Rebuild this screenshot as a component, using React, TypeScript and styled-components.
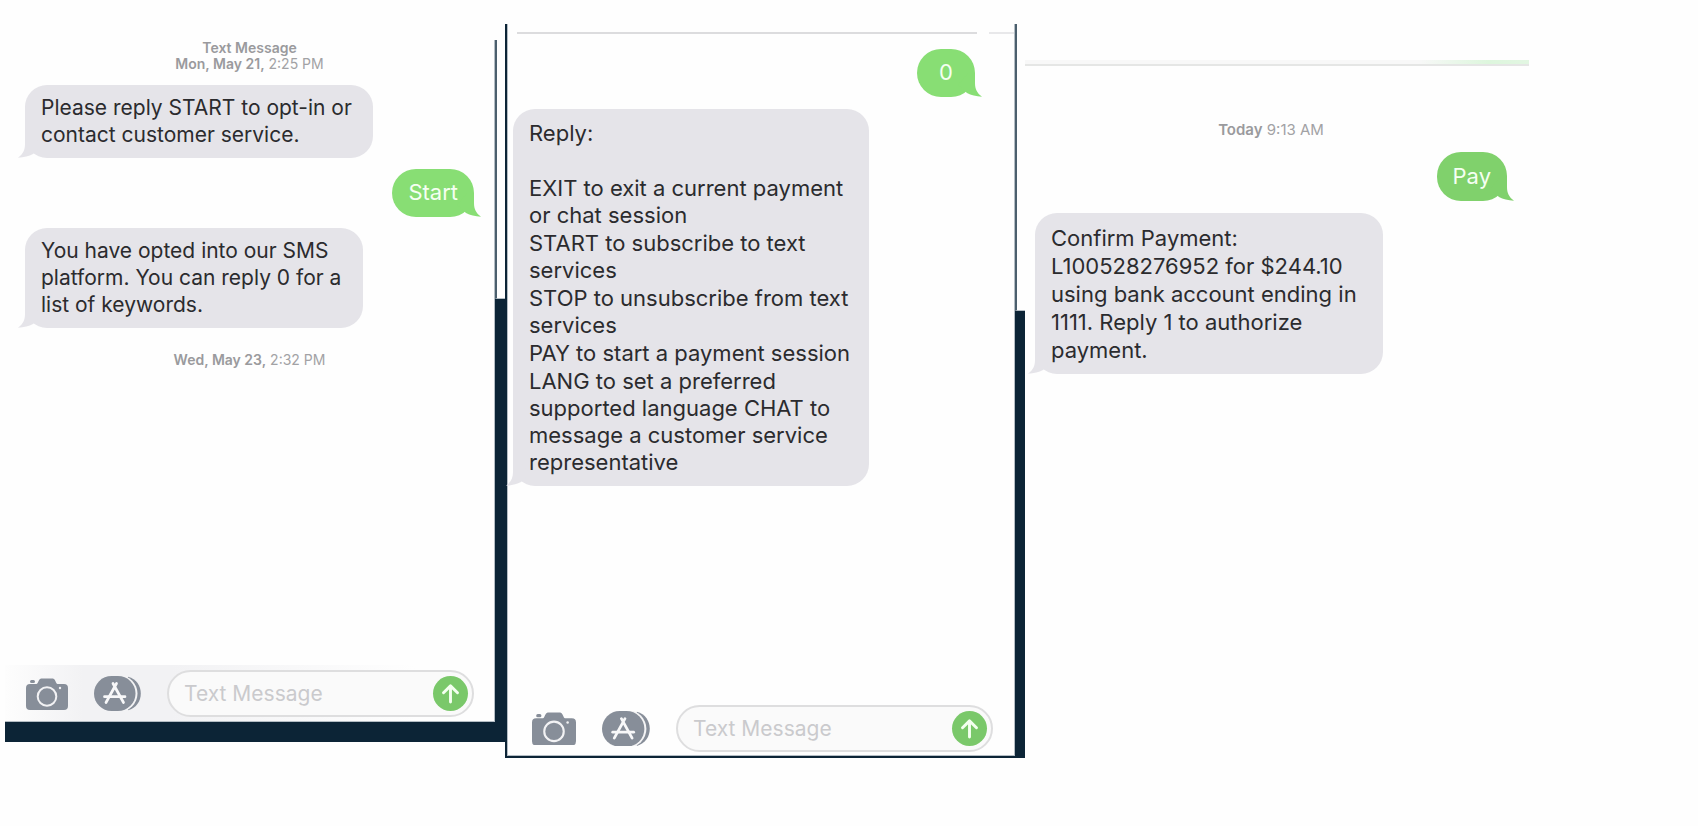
import React from "react";
import styled, { createGlobalStyle } from "styled-components";

const navy = "#0c2436";
const slate = "#4b5f6d";
const edge = "#b4bdc4";
const iconGray = "#878e99";

const GlobalStyle = createGlobalStyle`
  *, *::before, *::after { box-sizing: border-box; }
  body {
    margin: 0;
    background: #fefefe;
    font-family: Inter, "Liberation Sans", sans-serif;
    color: #2b2b2e;
  }
`;

const Page = styled.main`
  display: grid;
  grid-template-columns: 500fr 520fr 504fr 169fr;
  min-height: 100vh;
  padding-left: 5px;
`;

const Column = styled.section<{ $top: number; $bottom: number }>`
  display: flex;
  flex-direction: column;
  min-width: 0;
  margin: ${(p) => p.$top}px 0 ${(p) => p.$bottom}px;
`;

const Device = styled.div<{ $leftRule?: boolean }>`
  display: flex;
  flex: 1;
  border-left: ${(p) => (p.$leftRule ? `2px solid ${navy}` : "0")};
`;

const Screen = styled.div<{ $leftEdge?: boolean }>`
  display: flex;
  flex: 1;
  flex-direction: column;
  min-width: 0;
  border: 0 solid ${edge};
  border-width: 0 1px 1px ${(p) => (p.$leftEdge ? 1 : 0)}px;
`;

const Side = styled.div`
  display: flex;
  flex-direction: column;
  width: 10px;
  background: ${navy};
`;

const SideTop = styled.div<{ $height: number }>`
  height: ${(p) => p.$height}px;
  background: #fefefe;
  border-left: 2px solid ${slate};
  border-bottom: 1px solid ${edge};
`;

const Base = styled.div<{ $height: number }>`
  height: ${(p) => p.$height}px;
  background: ${navy};
`;

const Thread = styled.div<{ $pad: string }>`
  display: flex;
  flex: 1;
  flex-direction: column;
  align-items: flex-start;
  padding: ${(p) => p.$pad};
`;

const Stamp = styled.p<{ $gap: number; $size?: number }>`
  align-self: stretch;
  margin: 0 0 ${(p) => p.$gap}px;
  text-align: center;
  font-size: ${(p) => p.$size ?? 14}px;
  line-height: 16px;
  color: #a2a2a5;

  strong { font-weight: 600; color: #9a9a9d; }
`;

const Incoming = styled.div<{ $width: number; $size?: number; $line?: number; $gap?: number; $top?: number }>`
  position: relative;
  width: ${(p) => p.$width}px;
  max-width: 100%;
  margin-bottom: ${(p) => p.$gap ?? 0}px;
  padding: ${(p) => p.$top ?? 9}px 16px 10px;
  border-radius: 22px;
  background: #e5e4e9;
  font-size: ${(p) => p.$size ?? 21}px;
  line-height: ${(p) => p.$line ?? 27}px;

  p { margin: 0; }
  p + p { margin-top: 1px; }
  p:first-child:not(:last-child) { margin-bottom: 28px; }
`;

const Outgoing = styled.div<{ $gap: number; $color?: string; $line?: number }>`
  position: relative;
  align-self: flex-end;
  min-width: 58px;
  margin-bottom: ${(p) => p.$gap}px;
  padding: 10px 16px 11px;
  border-radius: 24px;
  background: ${(p) => p.$color ?? "#88de74"};
  color: #f5fff2;
  font-size: 22px;
  line-height: ${(p) => p.$line ?? 27}px;
  text-align: center;
`;

const TailShape = styled.svg<{ $side: "left" | "right" }>`
  position: absolute;
  bottom: 0;
  ${(p) => p.$side}: -7px;
  width: 26px;
  height: 24px;
  transform: ${(p) => (p.$side === "right" ? "scaleX(-1)" : "none")};
`;

const Tail = ({ side, color }: { side: "left" | "right"; color: string }) => (
  <TailShape $side={side} viewBox="0 0 26 24" aria-hidden="true">
    <path d="M7 0V10C7 16 5 20 0 23.800C6 23.500 11 22 15 20L24 12L14 0Z" fill={color} />
  </TailShape>
);

const TopRule = styled.div`
  display: flex;
  gap: 12px;
  padding: 8px 0 0 9px;

  &::before, &::after { content: ""; height: 2px; background: #dcdcde; }
  &::before { flex: 461; }
  &::after { flex: 25; background: #e8e8ea; }
`;

const HeaderRule = styled.div`
  height: 6px;
  margin-top: 60px;
  border-bottom: 2px solid #e5e6e5;
  background: linear-gradient(90deg, #f8f8f8 78%, #ddf6dd 92%, #e2f6e2);
`;

const ComposerBar = styled.form<{ $pad: string; $tinted?: boolean }>`
  display: flex;
  align-items: center;
  gap: 26px;
  padding: ${(p) => p.$pad};
  background: ${(p) =>
    p.$tinted
      ? "linear-gradient(90deg, #fdfdfd, #f2f2f4 16%, #f2f2f4 34%, #fefefe 84%)"
      : "transparent"};
`;

const IconButton = styled.button<{ $width: number }>`
  flex: none;
  width: ${(p) => p.$width}px;
  padding: 0;
  border: 0;
  background: none;
  color: ${iconGray};

  svg { display: block; width: 100%; height: auto; }
`;

const Field = styled.div`
  display: flex;
  flex: 1;
  align-items: center;
  min-width: 0;
  height: 47px;
  padding: 0 4px 0 15px;
  border: 2px solid #dededf;
  border-radius: 24px;
  background: #fafafa;
`;

const TextInput = styled.input`
  flex: 1;
  min-width: 0;
  padding: 0;
  border: 0;
  outline: 0;
  background: none;
  font: 21px/27px Inter, "Liberation Sans", sans-serif;
  color: #2b2b2e;

  &::placeholder { color: #cacacd; opacity: 1; }
`;

const SendButton = styled.button`
  flex: none;
  width: 35px;
  height: 35px;
  padding: 0;
  border: 0;
  border-radius: 50%;
  background: #7ac86a;

  svg { display: block; }
`;

const CameraIcon = () => (
  <svg viewBox="0 0 42 32" aria-hidden="true">
    <path
      d="M4 6H10.500C12 6 12.500 1 15 .5H27C29.500 1 30 6 31.500 6H38Q42 6 42 10V28Q42 32 38 32H4Q0 32 0 28V10Q0 6 4 6Z"
      fill="currentColor"
    />
    <rect x="4" y="2" width="5" height="3" rx="1.500" fill="currentColor" />
    <circle cx="21" cy="18.500" r="9.300" fill="none" stroke="#f2f2f4" strokeWidth="2" />
    <circle cx="34" cy="10" r="1.200" fill="#f2f2f4" />
  </svg>
);

const AppsIcon = () => (
  <svg viewBox="0 0 47 35" aria-hidden="true">
    <path d="M34 .8C42.500 3 46.800 10 46.800 17.500S42.500 32 34 34.200Z" fill="currentColor" />
    <rect x="0" y="-1" width="43.500" height="37" rx="18.500" fill="#f4f4f5" />
    <rect x="0" y="0" width="41.500" height="35" rx="17.500" fill="currentColor" />
    <g stroke="#f8f8f9" strokeWidth="2.700" strokeLinecap="round" fill="none">
      <path d="M19 7.500L29.500 26.500M22.500 7.500L12 26.500" />
      <path d="M10.500 20.700H31" />
    </g>
  </svg>
);

const Composer = ({ id, pad, tinted, icons }: {
  id: string;
  pad: string;
  tinted?: boolean;
  icons: [number, number];
}) => (
  <ComposerBar $pad={pad} $tinted={tinted} onSubmit={(e) => e.preventDefault()}>
    <IconButton type="button" aria-label="Camera" $width={icons[0]}><CameraIcon /></IconButton>
    <IconButton type="button" aria-label="Apps" $width={icons[1]}><AppsIcon /></IconButton>
    <Field>
      <TextInput id={id} type="text" placeholder="Text Message" aria-label="Text Message" />
      <SendButton type="submit" aria-label="Send">
        <svg viewBox="0 0 35 35" aria-hidden="true">
          <path
            d="M17.500 26V10.500M10.500 16.800L17.500 9.900L24.500 16.800"
            fill="none"
            stroke="#f4fff0"
            strokeWidth="2.900"
            strokeLinecap="round"
            strokeLinejoin="round"
          />
        </svg>
      </SendButton>
    </Field>
  </ComposerBar>
);

export default function App() {
  return (
    <>
      <GlobalStyle />
      <Page>
        <Column $top={40} $bottom={84}>
          <Device>
            <Screen>
              <Thread $pad="0 20px 0">
                <Stamp $gap={13}>
                  <strong>Text Message</strong>
                  <br />
                  <strong>Mon, May 21,</strong> 2:25 PM
                </Stamp>
                <Incoming $width={348} $gap={11}>
                  Please reply START to opt-in or contact customer service.
                  <Tail side="left" color="#e5e4e9" />
                </Incoming>
                <Outgoing $gap={11}>
                  Start
                  <Tail side="right" color="#88de74" />
                </Outgoing>
                <Incoming $width={338} $gap={24}>
                  You have opted into our SMS platform. You can reply 0 for a list of keywords.
                  <Tail side="left" color="#e5e4e9" />
                </Incoming>
                <Stamp $gap={0}>
                  <strong>Wed, May 23,</strong> 2:32 PM
                </Stamp>
              </Thread>
              <Composer id="reply-start" pad="5px 20px 4px 21px" tinted icons={[42, 47]} />
            </Screen>
            <Side><SideTop $height={259} /></Side>
          </Device>
          <Base $height={20} />
        </Column>

        <Column $top={24} $bottom={68}>
          <Device $leftRule>
            <Screen $leftEdge>
              <TopRule />
              <Thread $pad="15px 39px 0 5px">
                <Outgoing $gap={12}>
                  0
                  <Tail side="right" color="#88de74" />
                </Outgoing>
                <Incoming $width={356} $size={22} $top={11}>
                  <p>Reply:</p>
                  <p>EXIT to exit a current payment or chat session</p>
                  <p>START to subscribe to text services</p>
                  <p>STOP to unsubscribe from text services</p>
                  <p>PAY to start a payment session</p>
                  <p>LANG to set a preferred supported language CHAT to message a customer service representative</p>
                  <Tail side="left" color="#e5e4e9" />
                </Incoming>
              </Thread>
              <Composer id="reply-keywords" pad="4px 21px 3px 24px" icons={[44, 48]} />
            </Screen>
            <Side><SideTop $height={287} /></Side>
          </Device>
          <Base $height={2} />
        </Column>

        <Column $top={0} $bottom={0}>
          <HeaderRule />
          <Thread $pad="56px 22px 0 10px">
            <Stamp $gap={14} $size={15}>
              <strong>Today</strong> 9:13 AM
            </Stamp>
            <Outgoing $gap={12} $color="#80d16c" $line={28}>
              Pay
              <Tail side="right" color="#80d16c" />
            </Outgoing>
            <Incoming $width={348} $size={22} $line={28} $top={11}>
              Confirm Payment: L100528276952 for $244.10 using bank account ending in 1111. Reply 1 to authorize payment.
              <Tail side="left" color="#e5e4e9" />
            </Incoming>
          </Thread>
        </Column>
      </Page>
    </>
  );
}
